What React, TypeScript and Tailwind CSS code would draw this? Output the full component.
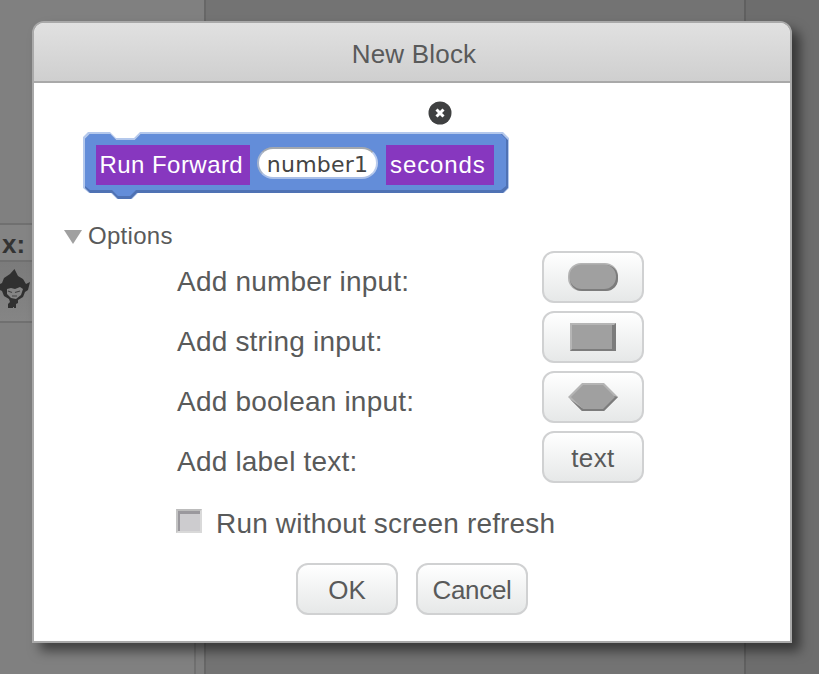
import type { ReactNode } from 'react';

const SANS = "font-['Liberation_Sans',Arial,sans-serif]";

function Backdrop() {
  return (
    <div className="flex h-full w-full bg-[#737373]">
      <div className="flex w-[194px] flex-col bg-[#808080]">
        <div className="h-[223px]" />
        <div className="flex h-[39px] items-center border-y-2 border-[#707070] bg-[#848484] pl-[2px] pt-[2px]">
          <span className="text-[26px] font-bold leading-none text-[#333]">x:</span>
        </div>
        <div className="h-[61px] border-b-2 border-[#707070] bg-linear-to-b from-[#7b7b7b] to-[#858585] pt-[6px]">
          <svg width="32" height="42" viewBox="0 0 32 42">
            <path
              d="M14.500 1L18 8l5 3 3 5 4-2-2 8-3 2-2 5-5 3 0 3-2 1v4h-2v-1h-1v1H8v-4l2-2-1-3-5-3-2-5-2-1v-6l2-1 2-5 6-4z"
              fill="#303030"
            />
            <path d="M7 21l4-1 4 1 5-2 3 2-2 6-5 4-5-1-4-4z" fill="#858585" />
            <path d="M8 23l4 1.500M15 24.500l5-1.500M12 28h5" fill="none" stroke="#444" strokeWidth="1.200" />
          </svg>
        </div>
      </div>
      <div className="flex w-[10px] flex-col">
        <div className="h-[60px] bg-[#808080]" />
        <div className="flex-1 border-l-2 border-[#707070] bg-[#7e7e7e]" />
      </div>
      <div className="w-[540px] border-l-2 border-[#676767] bg-[#737373]" />
      <div className="flex-1 border-l-2 border-[#606060] bg-[#6d6d6d]" />
    </div>
  );
}

function Button({ children, width = 'w-[102px]' }: { children: ReactNode; width?: string }) {
  return (
    <button
      className={`flex h-[52px] ${width} items-center justify-center rounded-[12px] border-2 border-[#d0d1d2] bg-linear-to-b from-white to-[#e6e8e8] pt-px text-[26px] leading-none text-[#595a5a]`}
    >
      {children}
    </button>
  );
}

function NumberShape() {
  return (
    <svg width="52" height="30" viewBox="0 0 52 30" className="-mt-px">
      <rect x="1" y="1" width="50" height="28" rx="13" fill="#b4b4b4" />
      <rect x="3" y="3" width="48" height="26" rx="12" fill="#7c7c7c" />
      <rect x="2.500" y="2.500" width="46.500" height="24.500" rx="12" fill="#a0a0a0" />
    </svg>
  );
}

function StringShape() {
  return (
    <svg width="46" height="28" viewBox="0 0 46 28" className="-mt-px">
      <path d="M0 0h46v28H0z" fill="#b5b5b5" />
      <path d="M46 0v28H0l2-2h40V2h2z" fill="#7c7c7c" />
      <path d="M2 2h40v24H2z" fill="#a0a0a0" />
    </svg>
  );
}

function BooleanShape() {
  return (
    <svg width="50" height="28" viewBox="0 0 50 28" className="-mt-px">
      <path d="M0 14L14 0h22l14 14-14 14H14z" fill="#b4b4b4" />
      <path d="M50 14L36 28H14L2 16l12 9h21l11-12z" fill="#7c7c7c" />
      <path d="M3 14L15 2h20l12 12-12 12H15z" fill="#a0a0a0" />
    </svg>
  );
}

function OptionRow({ label, children }: { label: string; children: ReactNode }) {
  return (
    <div className="flex h-[60px] items-start">
      <div className="w-[365px] pt-[15px] text-[28px] leading-[32px] tracking-[0.200px]">{label}</div>
      <Button>{children}</Button>
    </div>
  );
}

function BlockPreview() {
  return (
    <div className="relative h-[70px] w-[428px]">
      <svg className="absolute left-0 top-0" width="428" height="70" viewBox="0 0 428 70">
        <path
          d="M0 6l5-5h22l6 6h18l6-6h363l6 6v50l-5 5H55l-6 6H34l-6-6H6l-6-5z"
          fill="#b4c8ec"
        />
        <path d="M2 8l5-5h20l6 6h19l6-6h361l6 6v48l-5 5H54l-6 6H35l-6-6H7l-5-5z" fill="#4f72b4" />
        <path d="M2 8l5-5h20l6 6h19l6-6h360l5 5v47l-5 4H53l-6 6H35l-6-6H7l-5-4z" fill="#638dd9" />
      </svg>
      <div className="relative flex h-[54px] items-center pl-[13px] pt-[14px] text-[24px] leading-none text-white">
        <span className="flex h-[40px] w-[154px] items-center whitespace-nowrap bg-[#8737bf] pl-[3.500px] tracking-[0.450px]">
          Run Forward
        </span>
        <span className="-mt-[4px] ml-[7px] flex h-[32px] w-[121px] items-center justify-center rounded-full border-2 border-b-[#a9bfe8] border-l-[#a3b2cc] border-r-[#b9cbed] border-t-[#a3a8af] bg-white pt-[3px] font-['DejaVu_Sans',sans-serif] text-[22px] tracking-[0.200px] text-[#444]">
          number1
        </span>
        <span className="ml-[8px] flex h-[40px] w-[108px] items-center bg-[#8737bf] pl-[4px] tracking-[0.900px]">
          seconds
        </span>
      </div>
    </div>
  );
}

function Dialog() {
  return (
    <div className="h-[622px] w-[760px] overflow-hidden rounded-t-[12px] border-2 border-[#a9a9a9] bg-white text-[#595a5a] shadow-[8px_8px_12px_rgba(0,0,0,0.5)]">
      <div className="flex h-[60px] items-center justify-center border-b-2 border-[#a9a9a9] bg-linear-to-b from-[#e1e1e1] to-[#cfcfcf] pl-[4px] pt-[3px] text-[26px] leading-none tracking-[0.200px]">
        New Block
      </div>
      <div className="flex h-[48px] items-start pl-[394px] pt-[18px]">
        <svg width="24" height="24" viewBox="0 0 24 24">
          <circle cx="12" cy="12" r="11.500" fill="#3f4041" />
          <path d="M8.500 8.500l7 7M15.500 8.500l-7 7" stroke="#fff" strokeWidth="3" />
        </svg>
      </div>
      <div className="pl-[49px]">
        <BlockPreview />
      </div>
      <div className="flex h-[50px] items-center pl-[30px] pt-[20px]">
        <svg width="18" height="14" viewBox="0 0 18 14" className="mt-px">
          <path d="M0 0h18L9 14z" fill="#a0a0a0" />
        </svg>
        <span className="ml-[6px] text-[24px] leading-none tracking-[0.300px]">Options</span>
      </div>
      <div className="pl-[143px]">
        <OptionRow label="Add number input:">
          <NumberShape />
        </OptionRow>
        <OptionRow label="Add string input:">
          <StringShape />
        </OptionRow>
        <OptionRow label="Add boolean input:">
          <BooleanShape />
        </OptionRow>
        <OptionRow label="Add label text:">
          <span className="tracking-[0.400px]">text</span>
        </OptionRow>
      </div>
      <div className="flex h-[72px] items-start pl-[142px] pt-[17px]">
        <span className="mt-px h-[24px] w-[26px] border-2 border-b-[#d9d9d9] border-l-[#c4c4c4] border-r-[#d9d9d9] border-t-[#bcbcbc] bg-[#cdcccf] shadow-[inset_2px_3px_0_#9a989d]" />
        <span className="ml-[14px] text-[28px] leading-[32px] tracking-[0.180px]">Run without screen refresh</span>
      </div>
      <div className="flex gap-[18px] pl-[262px]">
        <Button>OK</Button>
        <Button width="w-[112px]">
          <span className="tracking-[-0.300px]">Cancel</span>
        </Button>
      </div>
    </div>
  );
}

export default function App() {
  return (
    <div className={`relative h-[674px] w-[819px] overflow-hidden ${SANS}`}>
      <Backdrop />
      <div className="absolute left-[32px] top-[21px]">
        <Dialog />
      </div>
    </div>
  );
}
